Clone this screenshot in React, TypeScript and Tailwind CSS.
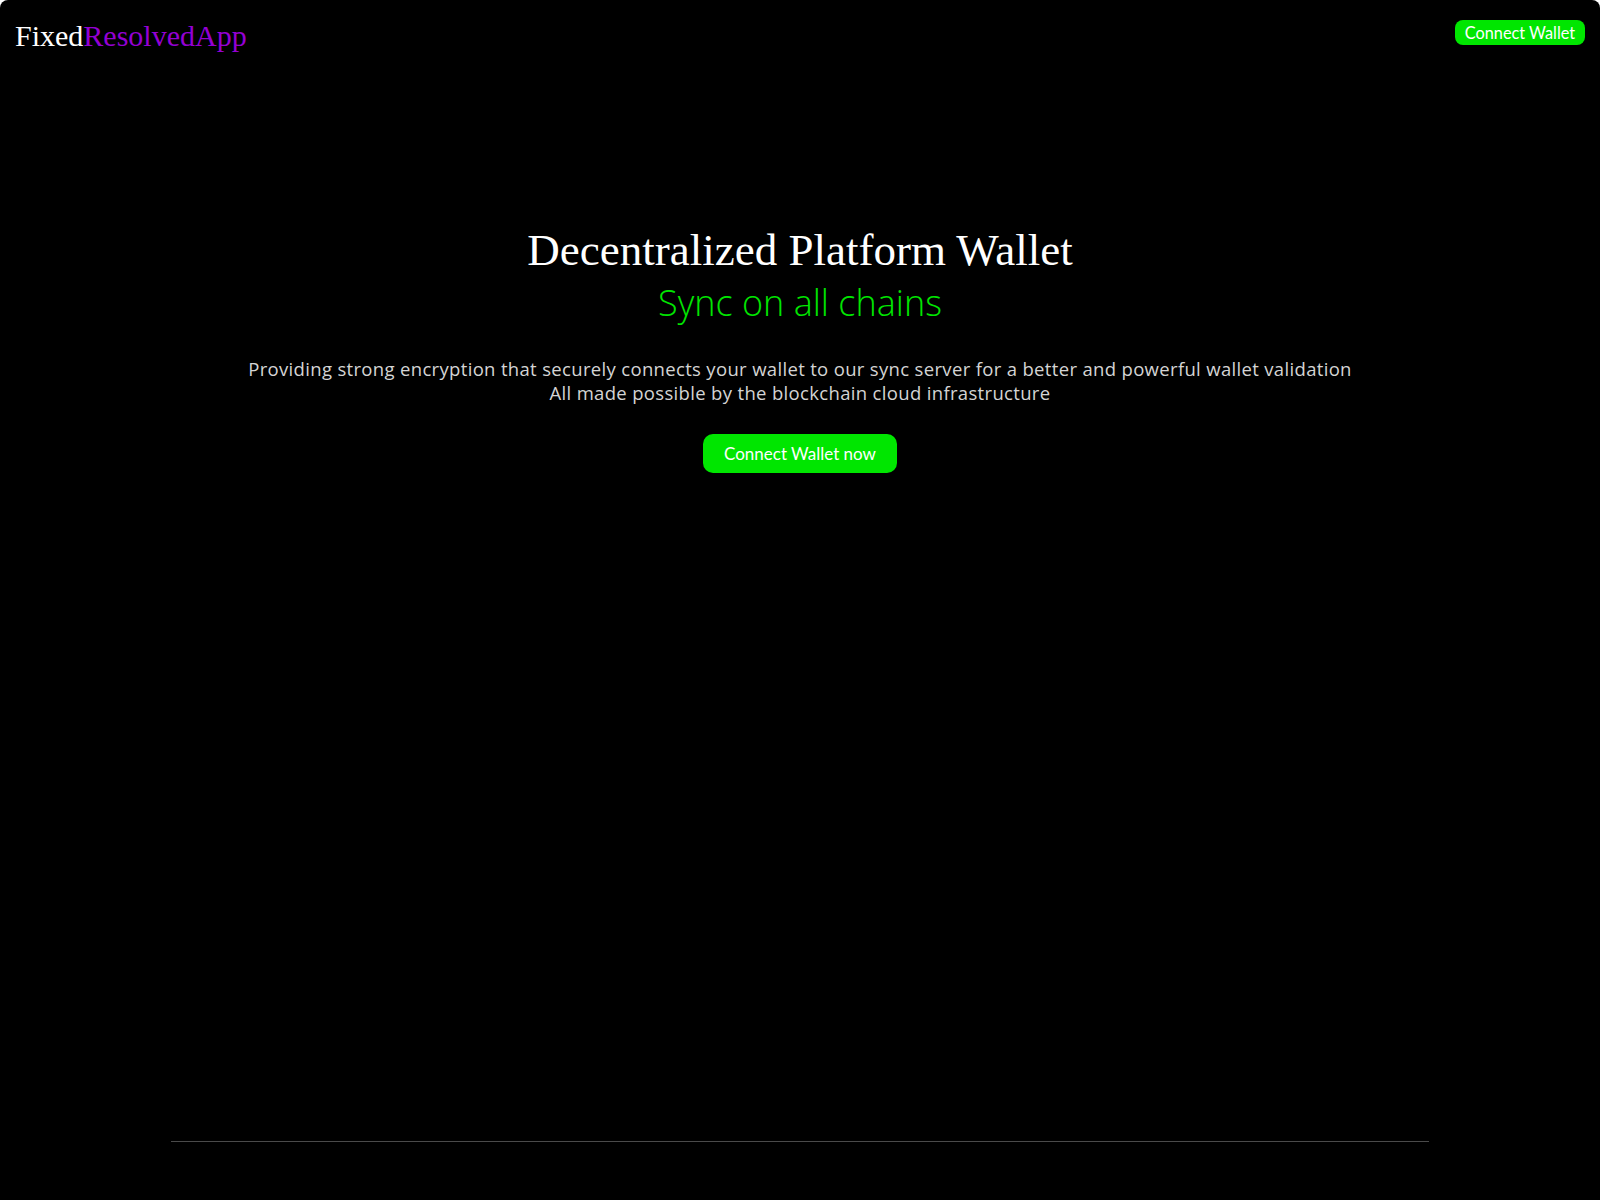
import React from 'react';

const sans = "font-['Lato','Open_Sans',sans-serif]";
const body = "font-['Open_Sans','Lato',sans-serif]";
const serif = "font-['Liberation_Serif','Times_New_Roman',serif]";

const App: React.FC = () => {
  return (
    <div className="min-h-screen bg-white">
      <div className="flex min-h-screen flex-col rounded-t-lg bg-black">
        <header className="flex h-[54px] items-start justify-between px-[15px] pt-[19px]">
          <div className={`${serif} text-[30px] leading-[34px] text-white`}>
            Fixed<span className="text-[#9400d3]">ResolvedApp</span>
          </div>
          <button
            className={`${sans} mt-px h-[25px] w-[130px] rounded-lg bg-[#00e600] text-[16.3px] leading-[25px] text-white`}
          >
            Connect Wallet
          </button>
        </header>

        <main className="flex flex-col items-center text-center">
          <h1 className={`${serif} mt-[171px] text-[45px] leading-[50px] text-white`}>
            Decentralized Platform Wallet
          </h1>
          <h2 className={`${body} mt-[7px] text-[36px] font-light leading-[42px] text-[#00e600]`}>
            Sync on all chains
          </h2>
          <p className={`${body} mt-[33px] text-[18.5px] leading-[23.5px] tracking-[0.33px] text-[#d4d4d4]`}>
            Providing strong encryption that securely connects your wallet to our sync server for a better and powerful wallet validation
            <br />
            All made possible by the blockchain cloud infrastructure
          </p>
          <button
            className={`${sans} mt-[30px] h-[39px] w-[194px] rounded-[10px] bg-[#00e600] text-[17px] text-white`}
          >
            Connect Wallet now
          </button>
        </main>

        <div className="flex-1" />
        <footer className="mx-auto h-[59px] w-[1258px] border-t border-[#4a4a4a]" />
      </div>
    </div>
  );
};

export default App;
